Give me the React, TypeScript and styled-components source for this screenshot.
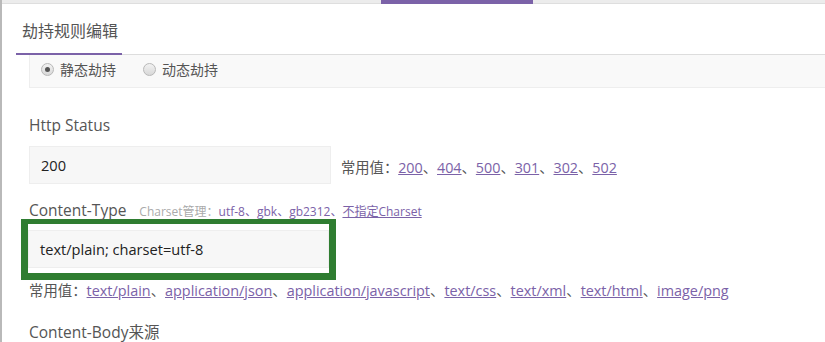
import * as React from 'react'
import styled, { createGlobalStyle } from 'styled-components'

const GlobalStyle = createGlobalStyle`
  html, body {
    margin: 0;
    padding: 0;
    background: #fff;
  }
  body {
    font-family: 'Open Sans', 'Noto Sans CJK SC', sans-serif;
    color: #555;
  }
`

const Page = styled.div`
  width: 825px;
  height: 342px;
  overflow: hidden;
  box-sizing: border-box;
  border-left: 2px solid #b9b9b9;
  background: #fff;
`

const TopBar = styled.div`
  display: flex;
  height: 4px;
`

const TopSegment = styled.div<{ $active?: boolean; $width?: number }>`
  flex: ${(p) => (p.$width ? `0 0 ${p.$width}px` : '1')};
  height: ${(p) => (p.$active ? '4px' : '3px')};
  background: ${(p) => (p.$active ? '#7b62a8' : '#ececec')};
  border-bottom: ${(p) => (p.$active ? 'none' : '1px solid #dedede')};
`

const TabHeader = styled.div`
  display: flex;
  margin-left: 14px;
  height: 50px;
  border-bottom: 1px solid #dddddd;
`

const Tab = styled.div`
  display: flex;
  align-items: center;
  padding: 2px 4px 0 6px;
  font-size: 16px;
  color: #555;
  border-bottom: 2px solid #7b62a8;
  margin-bottom: -1px;
`

const Body = styled.div`
  padding-left: 27px;
`

const RadioPanel = styled.div`
  display: flex;
  align-items: center;
  gap: 27px;
  box-sizing: border-box;
  height: 33px;
  padding: 0 0 4px 11px;
  background: #f9f9f9;
  border: 1px solid #eeeeee;
  border-top: none;
  border-right: none;
`

const RadioOption = styled.label`
  display: flex;
  align-items: center;
  gap: 6px;
  font-size: 14px;
  color: #555;
`

const RadioDot = styled.span<{ $checked?: boolean }>`
  position: relative;
  width: 11px;
  height: 11px;
  border-radius: 50%;
  border: 1px solid #b8b8b8;
  background: linear-gradient(#f2f2f2, #d8d8d8);

  &::after {
    content: '';
    display: ${(p) => (p.$checked ? 'block' : 'none')};
    position: absolute;
    left: 3px;
    top: 3px;
    width: 5px;
    height: 5px;
    border-radius: 50%;
    background: #555;
  }
`

const Label = styled.div<{ $top: number }>`
  display: flex;
  align-items: baseline;
  gap: 13px;
  margin-top: ${(p) => p.$top}px;
  font-size: 15.5px;
  line-height: 20px;
  color: #555;
`

const SubNote = styled.span`
  font-size: 12px;
  color: #aaa;
`

const PlainLink = styled.span`
  color: #7b62a8;
`

const Link = styled.a`
  color: #7b62a8;
  text-decoration: underline;
  cursor: pointer;
`

const FieldRow = styled.div`
  display: flex;
  align-items: center;
  gap: 10px;
  margin-top: 11px;
`

const Input = styled.div<{ $width: number }>`
  box-sizing: border-box;
  width: ${(p) => p.$width}px;
  height: 38px;
  display: flex;
  align-items: center;
  padding-left: 11px;
  background: #f7f7f7;
  border: 1px solid #eeeeee;
  font-size: 14.6px;
  color: #222;
  white-space: nowrap;
`

const Hint = styled.div`
  font-size: 14.3px;
  color: #555;
  padding-top: 3px;
`

const Highlight = styled.div`
  box-sizing: border-box;
  width: 315px;
  height: 61px;
  margin-left: -8px;
  margin-top: -3px;
  padding: 6px 0 0 0;
  border: 7px solid #2f7d31;
  border-top-width: 5px;
  overflow: hidden;
`

const HintLine = styled.div`
  margin-top: 2px;
  font-size: 14.4px;
  line-height: 18px;
  color: #555;
`

const statuses = ['200', '404', '500', '301', '302', '502']
const types = [
  'text/plain',
  'application/json',
  'application/javascript',
  'text/css',
  'text/xml',
  'text/html',
  'image/png',
]

function LinkList({ items }: { items: string[] }) {
  return (
    <>
      {items.map((item, i) => (
        <React.Fragment key={item}>
          <Link>{item}</Link>
          {i < items.length - 1 && '、'}
        </React.Fragment>
      ))}
    </>
  )
}

export default function App() {
  return (
    <Page>
      <GlobalStyle />
      <TopBar>
        <TopSegment $width={379} />
        <TopSegment $width={152} $active />
        <TopSegment />
      </TopBar>
      <TabHeader>
        <Tab>劫持规则编辑</Tab>
      </TabHeader>
      <Body>
        <RadioPanel>
          <RadioOption>
            <RadioDot $checked />
            静态劫持
          </RadioOption>
          <RadioOption>
            <RadioDot />
            动态劫持
          </RadioOption>
        </RadioPanel>

        <Label $top={27}>Http Status</Label>
        <FieldRow>
          <Input $width={302}>200</Input>
          <Hint>
            常用值：<LinkList items={statuses} />
          </Hint>
        </FieldRow>

        <Label $top={16}>
          Content-Type
          <SubNote>
            Charset管理：<PlainLink>utf-8、gbk、gb2312、</PlainLink>
            <Link>不指定Charset</Link>
          </SubNote>
        </Label>
        <Highlight>
          <Input $width={301}>text/plain; charset=utf-8</Input>
        </Highlight>
        <HintLine>
          常用值：<LinkList items={types} />
        </HintLine>

        <Label $top={22}>Content-Body来源</Label>
      </Body>
    </Page>
  )
}
